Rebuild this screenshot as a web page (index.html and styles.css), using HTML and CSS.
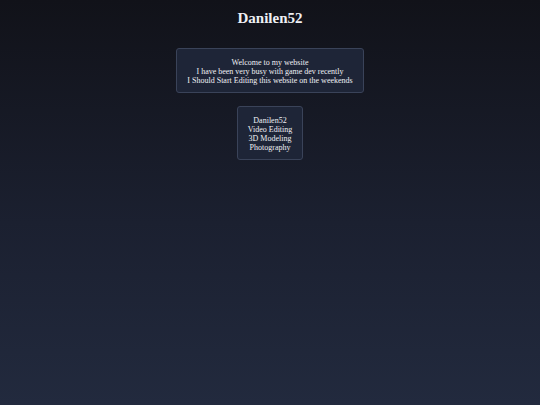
FILE: index.html
```html
<!DOCTYPE html>
<html>
<head>
<meta charset="utf-8">
<link rel="stylesheet" href="styles.css">
</head>
<body>
<div class="page">
  <h1 class="title">Danilen52</h1>
  <div class="box">
    <p>Welcome to my website</p>
    <p>I have been very busy with game dev recently</p>
    <p>I Should Start Editing this website on the weekends</p>
  </div>
  <div class="box">
    <p>Danilen52</p>
    <p>Video Editing</p>
    <p>3D Modeling</p>
    <p>Photography</p>
  </div>
</div>
</body>
</html>
```
FILE: styles.css
```css
html, body {
  margin: 0;
  padding: 0;
}
body {
  width: 540px;
  height: 405px;
  background: linear-gradient(to bottom, #111219 0%, #1b2030 55%, #222a3e 100%);
  font-family: "Liberation Serif", serif;
  color: #eef0f4;
}
.page {
  display: flex;
  flex-direction: column;
  align-items: center;
  gap: 13px;
  padding-top: 9px;
}
.title {
  margin: 0 0 8px 0;
  font-size: 15px;
  font-weight: bold;
  line-height: 18px;
}
.box {
  background: #1e2537;
  border: 1px solid #3a4359;
  border-radius: 3px;
  padding: 8.5px 10px 7.5px;
  text-align: center;
  font-size: 8px;
  line-height: 9px;
}
.box p {
  margin: 0;
}
```
